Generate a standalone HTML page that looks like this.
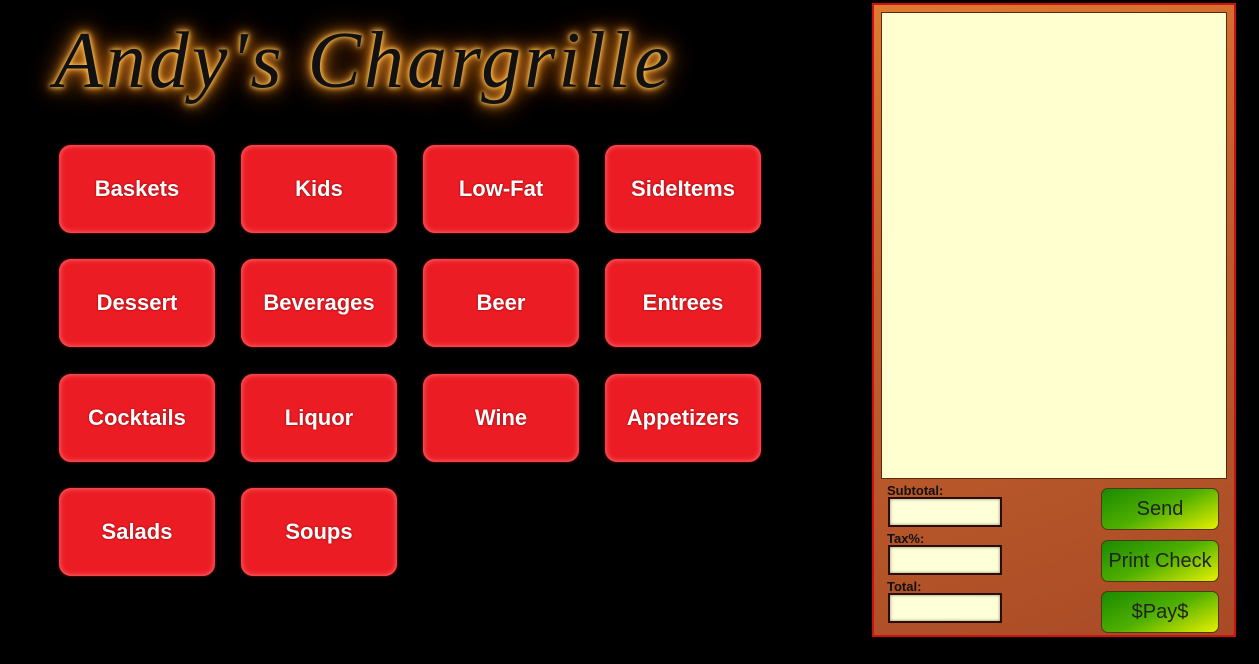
<!DOCTYPE html>
<html><head><style>
html,body{margin:0;padding:0;background:#000;width:1259px;height:664px;overflow:hidden;position:relative;font-family:"Liberation Sans",sans-serif}
.title{position:absolute;left:54px;top:16px;font-family:"Liberation Serif",serif;font-style:italic;font-size:80px;color:#111;letter-spacing:3px;
text-shadow:0 0 4px #ffd060,0 0 8px #ffb040,0 0 14px #ff9020,0 0 24px #c06010,0 0 32px #804010;white-space:nowrap}
.b{position:absolute;width:156px;height:88px;border-radius:12px;background:#ec1c24;box-shadow:inset 0 0 6px rgba(255,150,150,.8),0 0 2px #a00;color:#fff;font-size:22px;font-weight:bold;display:flex;align-items:center;justify-content:center;text-shadow:0 0 2px #800}
.panel{position:absolute;left:872px;top:3px;width:360px;height:630px;border:2px solid #d01010;background:linear-gradient(160deg,#e07a30 0%,#c2602c 40%,#a84a26 100%)}
.paper{position:absolute;left:7px;top:7px;width:344px;height:465px;background:#ffffd0;border:1px solid #5a2a10}
.lbl{position:absolute;left:13px;font-size:13px;font-weight:bold;color:#111}
.in{position:absolute;left:14px;width:110px;height:26px;background:#ffffd8;border:2px solid #2a0d05;box-shadow:inset 0 0 3px #888}
.g{position:absolute;left:227px;width:116px;height:40px;border-radius:7px;border:1px solid #4a3a10;background:linear-gradient(155deg,#1a8a00 0%,#50b000 50%,#e8f000 100%);color:#222;font-size:20px;display:flex;align-items:center;justify-content:center}
</style></head><body>
<div class="title">Andy's Chargrille</div>
<div class="b" style="left:59px;top:145px">Baskets</div>
<div class="b" style="left:241px;top:145px">Kids</div>
<div class="b" style="left:423px;top:145px">Low-Fat</div>
<div class="b" style="left:605px;top:145px">SideItems</div>
<div class="b" style="left:59px;top:259px">Dessert</div>
<div class="b" style="left:241px;top:259px">Beverages</div>
<div class="b" style="left:423px;top:259px">Beer</div>
<div class="b" style="left:605px;top:259px">Entrees</div>
<div class="b" style="left:59px;top:374px">Cocktails</div>
<div class="b" style="left:241px;top:374px">Liquor</div>
<div class="b" style="left:423px;top:374px">Wine</div>
<div class="b" style="left:605px;top:374px">Appetizers</div>
<div class="b" style="left:59px;top:488px">Salads</div>
<div class="b" style="left:241px;top:488px">Soups</div>
<div class="panel">
<div class="paper"></div>
<div class="lbl" style="top:478px">Subtotal:</div>
<div class="in" style="top:492px"></div>
<div class="lbl" style="top:526px">Tax%:</div>
<div class="in" style="top:540px"></div>
<div class="lbl" style="top:574px">Total:</div>
<div class="in" style="top:588px"></div>
<div class="g" style="top:483px">Send</div>
<div class="g" style="top:535px">Print Check</div>
<div class="g" style="top:586px">$Pay$</div>
</div>
</body></html>
